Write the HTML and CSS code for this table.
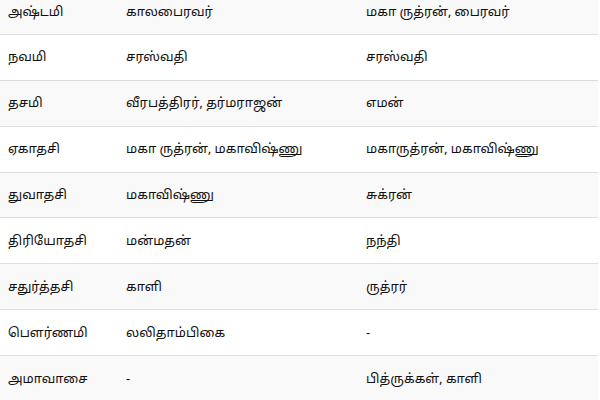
FILE: index.html
```html
<!DOCTYPE html>
<html lang="ta">
<head>
<meta charset="utf-8">
<link rel="stylesheet" href="styles.css">
</head>
<body>
<table class="tithi">
  <colgroup>
    <col class="c1"><col class="c2"><col class="c3">
  </colgroup>
  <tbody>
    <tr><td>அஷ்டமி</td><td>காலபைரவர்</td><td>மகா ருத்ரன், பைரவர்</td></tr>
    <tr><td>நவமி</td><td>சரஸ்வதி</td><td>சரஸ்வதி</td></tr>
    <tr><td>தசமி</td><td>வீரபத்திரர், தர்மராஜன்</td><td>எமன்</td></tr>
    <tr><td>ஏகாதசி</td><td>மகா ருத்ரன், மகாவிஷ்ணு</td><td>மகாருத்ரன், மகாவிஷ்ணு</td></tr>
    <tr><td>துவாதசி</td><td>மகாவிஷ்ணு</td><td>சுக்ரன்</td></tr>
    <tr><td>திரியோதசி</td><td>மன்மதன்</td><td>நந்தி</td></tr>
    <tr><td>சதுர்த்தசி</td><td>காளி</td><td>ருத்ரர்</td></tr>
    <tr><td>பௌர்ணமி</td><td>லலிதாம்பிகை</td><td>-</td></tr>
    <tr><td>அமாவாசை</td><td>-</td><td>பித்ருக்கள், காளி</td></tr>
  </tbody>
</table>
</body>
</html>
```
FILE: styles.css
```css
html, body {
  margin: 0;
  padding: 0;
  background: #fff;
}
body {
  font-family: "Noto Sans Tamil", "Latha", "Noto Sans", "DejaVu Sans", sans-serif;
  font-size: 13px;
  color: #111;
  overflow: hidden;
}
.tithi {
  width: 598px;
  border-collapse: collapse;
  table-layout: fixed;
  margin-top: -11.86px;
}
.c1 { width: 118px; }
.c2 { width: 240px; }
.c3 { width: 240px; }
.tithi td {
  height: 45.86px;
  padding: 2px 8px 0;
  border-top: 1px solid #ddd;
  vertical-align: middle;
  white-space: nowrap;
  box-sizing: border-box;
}
.tithi tr:nth-child(odd) td {
  background: #f9f9f9;
}
```
